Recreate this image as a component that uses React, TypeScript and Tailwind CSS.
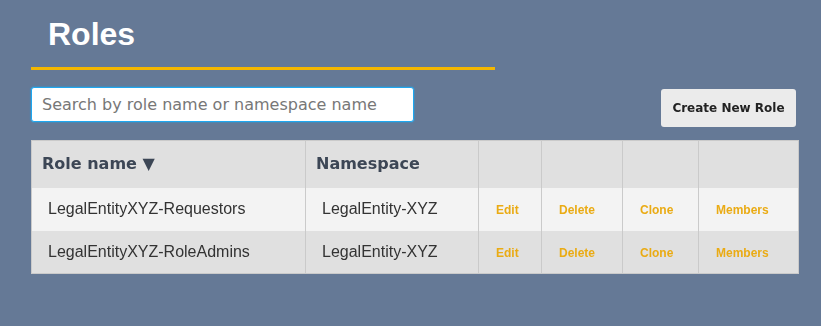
import React from "react";

const rows = [
  { name: "LegalEntityXYZ-Requestors", ns: "LegalEntity-XYZ", bg: "bg-[#f3f3f3]" },
  { name: "LegalEntityXYZ-RoleAdmins", ns: "LegalEntity-XYZ", bg: "bg-[#e0e0e0]" },
];

const actions = ["Edit", "Delete", "Clone", "Members"];

export default function App() {
  return (
    <div className="min-h-[326px] w-[821px] bg-[#657996] pl-[31px] pr-[23px] pt-[18px] font-['DejaVu_Sans',sans-serif]">
      <h1 className="pl-[17px] h-[32px] leading-[32px] text-[32px] font-bold text-white font-['Liberation_Sans',Arial,sans-serif]">
        Roles
      </h1>
      <div className="mt-[17px] h-[3px] w-[464px] bg-[#f4b700]" />
      <div className="mt-[17px] flex items-start justify-between">
        <input
          type="text"
          autoFocus
          placeholder="Search by role name or namespace name"
          className="h-[35px] w-[383px] rounded-[3px] border-[1.5px] border-solid !border-[#1ea7f0] bg-white pl-[10px] text-[16px] text-[#333] caret-black shadow-[0_0_2px_#1ea7f0] outline-none placeholder:text-[#777] font-['DejaVu_Sans',sans-serif]"
        />
        <button className="mt-[2px] mr-[2px] h-[38px] w-[135px] rounded-[3px] bg-[#ebebeb] text-[12px] font-bold text-[#222] font-['DejaVu_Sans',sans-serif]">
          Create New Role
        </button>
      </div>
      <table className="mt-[13px] w-[767px] table-fixed border-collapse border border-[#cacaca]">
        <colgroup>
          <col className="w-[274px]" />
          <col className="w-[173px]" />
          <col className="w-[63px]" />
          <col className="w-[81px]" />
          <col className="w-[76px]" />
          <col className="w-[100px]" />
        </colgroup>
        <thead>
          <tr className="h-[47px] bg-[#e0e0e0] text-left text-[16px] font-bold text-[#3c4655]">
            <th className="border-r border-[#cacaca] pl-[10px] font-bold">Role name ▼</th>
            <th className="border-r border-[#cacaca] pl-[10px] font-bold">Namespace</th>
            <th className="border-r border-[#cacaca]" />
            <th className="border-r border-[#cacaca]" />
            <th className="border-r border-[#cacaca]" />
            <th />
          </tr>
        </thead>
        <tbody>
          {rows.map((r) => (
            <tr key={r.name} className={`h-[43px] ${r.bg}`}>
              <td className="border-r border-[#cacaca] pl-[16px] text-[16px] text-[#333] font-['Liberation_Sans',Arial,sans-serif]">
                {r.name}
              </td>
              <td className="border-r border-[#cacaca] pl-[16px] text-[16px] text-[#333] font-['Liberation_Sans',Arial,sans-serif]">
                {r.ns}
              </td>
              {actions.map((a, i) => (
                <td
                  key={a}
                  className={`${i < 3 ? "border-r border-[#cacaca]" : ""} pl-[17px] pt-[2px] text-[12px] font-bold text-[#eaab14] font-['Liberation_Sans',Arial,sans-serif]`}
                >
                  {a}
                </td>
              ))}
            </tr>
          ))}
        </tbody>
      </table>
    </div>
  );
}
